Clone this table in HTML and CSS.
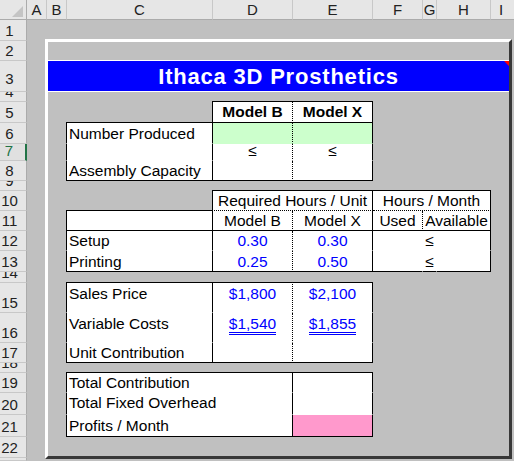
FILE: index.html
```html
<!DOCTYPE html>
<html>
<head>
<meta charset="utf-8">
<link rel="stylesheet" href="styles.css">
</head>
<body>
<div class="sheet">
  <div class="corner"><span class="tri"></span></div>
  <div class="ch cA">A</div>
  <div class="ch cB">B</div>
  <div class="ch cC">C</div>
  <div class="ch cD">D</div>
  <div class="ch cE">E</div>
  <div class="ch cF">F</div>
  <div class="ch cG">G</div>
  <div class="ch cH">H</div>
  <div class="ch cIlast">I</div>

  <div class="rh r1">1</div>
  <div class="rh r2">2</div>
  <div class="rh r3 tall">3</div>
  <div class="rh r4">4</div>
  <div class="rh r5">5</div>
  <div class="rh r6">6</div>
  <div class="rh r7 sel">7</div>
  <div class="rh r8">8</div>
  <div class="rh r9">9</div>
  <div class="rh r10">10</div>
  <div class="rh r11">11</div>
  <div class="rh r12">12</div>
  <div class="rh r13">13</div>
  <div class="rh r14">14</div>
  <div class="rh r15">15</div>
  <div class="rh r16">16</div>
  <div class="rh r17">17</div>
  <div class="rh r18">18</div>
  <div class="rh r19">19</div>
  <div class="rh r20">20</div>
  <div class="rh r21">21</div>
  <div class="rh r22">22</div>
  <div class="rh r23"></div>

  <div class="frame"></div>
  <div class="title">Ithaca 3D Prosthetics<span class="note"></span></div>

  <div class="x cD r5 T L Rd B bold ctr mid">Model B</div>
  <div class="x cE r5 T R B bold ctr mid">Model X</div>

  <div class="x cC r6 T L R">Number Produced</div>
  <div class="x cD r6 Rd grn"></div>
  <div class="x cE r6 R grn"></div>

  <div class="x cC r7 L R"></div>
  <div class="x cD r7 Rd ctr">≤</div>
  <div class="x cE r7 R ctr">≤</div>

  <div class="x cC r8 L R B">Assembly Capacity</div>
  <div class="x cD r8 Rd B"></div>
  <div class="x cE r8 R B"></div>

  <div class="x cDE r10 T L R Bd ctr">Required Hours / Unit</div>
  <div class="x cFH r10 T R Bd ctr">Hours / Month</div>

  <div class="x cC r11 T L R B"></div>
  <div class="x cD r11 Rd B ctr">Model B</div>
  <div class="x cE r11 R B ctr">Model X</div>
  <div class="x cF r11 Rd B ctr">Used</div>
  <div class="x cGH r11 R B ctr">Available</div>

  <div class="x cC r12 L R">Setup</div>
  <div class="x cD r12 Rd ctr blue">0.30</div>
  <div class="x cE r12 R ctr blue">0.30</div>
  <div class="x cF r12"></div>
  <div class="x cG r12 ctr">≤</div>
  <div class="x cH r12 R"></div>

  <div class="x cC r13 L R B">Printing</div>
  <div class="x cD r13 Rd B ctr blue">0.25</div>
  <div class="x cE r13 R B ctr blue">0.50</div>
  <div class="x cF r13 B"></div>
  <div class="x cG r13 B ctr">≤</div>
  <div class="x cH r13 R B"></div>

  <div class="x cC r15 T L R top">Sales Price</div>
  <div class="x cD r15 T Rd ctr top blue">$1,800</div>
  <div class="x cE r15 T R ctr top blue">$2,100</div>

  <div class="x cC r16 L R top">Variable Costs</div>
  <div class="x cD r16 Rd ctr top blue"><span class="dbl">$1,540</span></div>
  <div class="x cE r16 R ctr top blue"><span class="dbl">$1,855</span></div>

  <div class="x cC r17 L R B">Unit Contribution</div>
  <div class="x cD r17 Rd B"></div>
  <div class="x cE r17 R B"></div>

  <div class="x cCD r19 T L R">Total Contribution</div>
  <div class="x cE r19 T R"></div>

  <div class="x cCD r20 L R pb2">Total Fixed Overhead</div>
  <div class="x cE r20 R"></div>

  <div class="x cCD r21 L R B pb1">Profits / Month</div>
  <div class="x cE r21 R B pink"></div>
</div>
</body>
</html>
```

FILE: styles.css
```css
* { box-sizing: border-box; }

body {
  margin: 0;
  background: #c0c0c0;
}

.sheet {
  display: grid;
  width: 514px;
  height: 461px;
  overflow: hidden;
  background: #c0c0c0;
  font-family: "Liberation Sans", Arial, sans-serif;
  grid-template-columns: 27px 20px 20px 146px 80px 80px 50px 14px 54px 20px 1fr;
  grid-template-rows: 20px 21px 20px 31px 10px 21px 21px 17px 20px 10px 20px 20px 20px 21px 11px 30px 30px 20px 10px 20px 22px 22px 21px 1fr;
}

/* column placement */
.cA { grid-column: 2; }
.cB { grid-column: 3; }
.cC { grid-column: 4; }
.cD { grid-column: 5; }
.cE { grid-column: 6; }
.cF { grid-column: 7; }
.cG { grid-column: 8; }
.cH { grid-column: 9; }
.cIlast { grid-column: 10 / 12; }
.cCD { grid-column: 4 / 6; }
.cDE { grid-column: 5 / 7; }
.cFH { grid-column: 7 / 10; }
.cGH { grid-column: 8 / 10; }

/* row placement */
.r1 { grid-row: 2; }
.r2 { grid-row: 3; }
.r3 { grid-row: 4; }
.r4 { grid-row: 5; }
.r5 { grid-row: 6; }
.r6 { grid-row: 7; }
.r7 { grid-row: 8; }
.r8 { grid-row: 9; }
.r9 { grid-row: 10; }
.r10 { grid-row: 11; }
.r11 { grid-row: 12; }
.r12 { grid-row: 13; }
.r13 { grid-row: 14; }
.r14 { grid-row: 15; }
.r15 { grid-row: 16; }
.r16 { grid-row: 17; }
.r17 { grid-row: 18; }
.r18 { grid-row: 19; }
.r19 { grid-row: 20; }
.r20 { grid-row: 21; }
.r21 { grid-row: 22; }
.r22 { grid-row: 23; }
.r23 { grid-row: 24; }

/* headers */
.corner {
  grid-row: 1;
  grid-column: 1;
  background: #e6e6e6;
  border-right: 1px solid #ababab;
  border-bottom: 1px solid #ababab;
  display: flex;
  justify-content: flex-end;
  align-items: flex-end;
  padding: 0 3px 2px 0;
}
.tri {
  width: 0;
  height: 0;
  border-left: 11px solid transparent;
  border-bottom: 11px solid #c4c4c4;
}

.ch {
  grid-row: 1;
  background: #e6e6e6;
  border-right: 1px solid #c8c8c8;
  border-bottom: 1px solid #ababab;
  display: flex;
  align-items: center;
  justify-content: center;
  padding-top: 1px;
  font-size: 15px;
  line-height: 18px;
  color: #222;
  overflow: hidden;
}
.ch.cIlast {
  border-right: none;
  padding-right: 3px;
}

.rh {
  grid-column: 1;
  background: #e6e6e6;
  border-right: 1px solid #ababab;
  border-bottom: 1px solid #c8c8c8;
  display: flex;
  align-items: flex-end;
  justify-content: center;
  padding-right: 7px;
  font-size: 15px;
  line-height: 18px;
  color: #222;
  overflow: hidden;
}
.rh.tall { padding-bottom: 3px; }
.rh.sel {
  color: #217346;
  background: #e0e0e0;
  border-right: 2px solid #217346;
}

/* decorative frame and title */
.frame {
  grid-column: 3 / 11;
  grid-row: 3 / 24;
  margin: -2px -1px -1px -2px;
  border-style: solid;
  border-width: 3px;
  border-color: #fff #383838 #383838 #fff;
}

.title {
  grid-column: 3 / 11;
  grid-row: 4;
  margin: -1px 2px 0 1px;
  position: relative;
  background: #0000ff;
  border-top: 1px solid #fff;
  border-bottom: 1px solid #fff;
  color: #fff;
  font-weight: bold;
  font-size: 22px;
  letter-spacing: 0.8px;
  line-height: 27px;
  display: flex;
  align-items: center;
  justify-content: center;
  white-space: nowrap;
}
.note {
  position: absolute;
  top: 0;
  right: 0;
  width: 0;
  height: 0;
  border-left: 5px solid transparent;
  border-top: 5px solid #ff0000;
}

/* data cells */
.x {
  background: #fff;
  border-right: 1px solid #fff;
  border-bottom: 1px solid #fff;
  display: flex;
  align-items: flex-end;
  padding-left: 2px;
  font-size: 15.5px;
  line-height: 18px;
  color: #000;
  white-space: nowrap;
}
.T { margin-top: -1px; border-top: 1px solid #000; }
.L { margin-left: -1px; border-left: 1px solid #000; }
.R { border-right-color: #000; }
.B { border-bottom-color: #000; }
.Rd { border-right: 1px dotted #000; }
.Bd { border-bottom: 1px dotted #000; }

.ctr { justify-content: center; padding-left: 0; }
.mid { align-items: center; }
.top { align-items: flex-start; padding-top: 2px; }
.pb1 { padding-bottom: 1px; }
.pb2 { padding-bottom: 2px; }
.bold { font-weight: bold; }
.blue { color: #0000ff; }
.grn { background: #ccffcc; border-bottom-color: #ccffcc; }
.pink { background: #ff99cc; }

.dbl {
  height: 20px;
  line-height: 18px;
  border-bottom: 3px double #0000ff;
}
```
